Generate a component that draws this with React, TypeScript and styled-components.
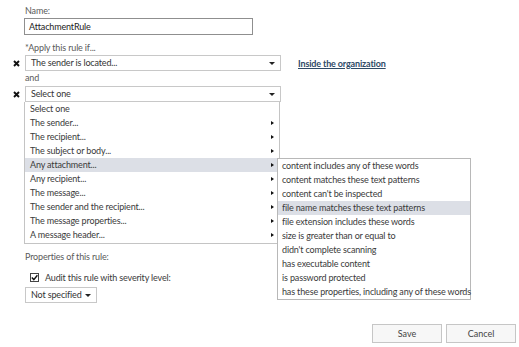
import React from 'react';
import styled, { createGlobalStyle } from 'styled-components';

const GlobalStyle = createGlobalStyle`
  html, body {
    margin: 0;
    padding: 0;
    background: #ffffff;
  }
  body {
    font-family: Lato, "Noto Sans", sans-serif;
    font-size: 9px;
    letter-spacing: -0.15px;
    color: #3a3a3a;
  }
`;

const Page = styled.div`
  position: relative;
  width: 519px;
  height: 347px;
  box-sizing: border-box;
  padding: 4px 0 0 10px;
  display: flex;
  flex-direction: column;
  overflow: hidden;
`;

const Label = styled.div<{ $top?: number }>`
  padding-left: 15px;
  margin-top: ${({ $top }) => $top ?? 0}px;
  height: 14px;
  line-height: 14px;
  color: #5a5a5a;
`;

const NameInput = styled.div`
  margin: 0 0 0 14px;
  width: 229px;
  height: 17px;
  box-sizing: border-box;
  border: 1px solid #8f8f8f;
  padding: 0 4px;
  line-height: 15px;
  color: #222222;
`;

const ConditionRow = styled.div<{ $top?: number }>`
  display: flex;
  align-items: center;
  margin-top: ${({ $top }) => $top ?? 0}px;
`;

const Remove = styled.span`
  width: 15px;
  display: flex;
  align-items: center;
  justify-content: flex-start;
  padding-left: 3px;
  box-sizing: border-box;
`;

const Select = styled.div<{ $width: number; $height?: number }>`
  position: relative;
  width: ${({ $width }) => $width}px;
  height: ${({ $height }) => $height ?? 16}px;
  box-sizing: border-box;
  border: 1px solid #c8c8c8;
  padding: 0 18px 0 5px;
  line-height: ${({ $height }) => ($height ?? 16) - 2}px;
  color: #333333;
  white-space: nowrap;
`;

const Caret = styled.span`
  position: absolute;
  right: 5px;
  top: 50%;
  margin-top: -1px;
  width: 0;
  height: 0;
  border-left: 3px solid transparent;
  border-right: 3px solid transparent;
  border-top: 3px solid #222222;
`;

const OrgLink = styled.a`
  margin-left: 17px;
  font-weight: 700;
  color: #2e4a66;
  text-decoration: underline;
`;

const Menu = styled.div`
  margin-left: 14px;
  width: 256px;
  box-sizing: border-box;
  border: 1px solid #c4c4c4;
  border-top: none;
  padding-bottom: 1px;
  background: #ffffff;
`;

const MenuItem = styled.div<{ $active?: boolean }>`
  position: relative;
  height: 14px;
  line-height: 14px;
  padding-left: 5px;
  background: ${({ $active }) => ($active ? '#dcdfe6' : 'transparent')};
  white-space: nowrap;
`;

const Arrow = styled.span`
  position: absolute;
  right: 5px;
  top: 5px;
  width: 0;
  height: 0;
  border-top: 2.5px solid transparent;
  border-bottom: 2.5px solid transparent;
  border-left: 3px solid #111111;
`;

const Flyout = styled.div`
  position: absolute;
  left: 252px;
  top: 0;
  width: 194px;
  box-sizing: border-box;
  border: 1px solid #b8b8b8;
  background: #ffffff;
  z-index: 2;
`;

const FlyoutItem = styled.div<{ $active?: boolean }>`
  height: 14px;
  line-height: 14px;
  padding-left: 4px;
  background: ${({ $active }) => ($active ? '#dcdfe6' : 'transparent')};
  white-space: nowrap;
`;

const CheckRow = styled.div`
  display: flex;
  align-items: center;
  gap: 6px;
  margin: 6px 0 0 20px;
  height: 14px;
`;

const Box = styled.span`
  width: 9px;
  height: 9px;
  box-sizing: border-box;
  border: 1px solid #444444;
  display: flex;
  align-items: center;
  justify-content: center;
`;

const Severity = styled.div`
  margin: 3px 0 0 15px;
`;

const Footer = styled.div`
  margin-top: auto;
  margin-bottom: 4px;
  display: flex;
  justify-content: flex-end;
  gap: 4px;
  padding-right: 3px;
`;

const Button = styled.button`
  width: 70px;
  height: 19px;
  box-sizing: border-box;
  border: 1px solid #c6c6c6;
  background: #f7f7f7;
  color: #444444;
  font-family: Lato, "Noto Sans", sans-serif;
  font-size: 9px;
  padding: 0;
`;

const XIcon = () => (
  <svg width="7" height="7" viewBox="0 0 7 7">
    <path d="M1 1 L6 6 M6 1 L1 6" stroke="#111" strokeWidth="1.9" />
  </svg>
);

const Tick = () => (
  <svg width="7" height="7" viewBox="0 0 7 7">
    <path d="M0.8 3.6 L2.8 5.6 L6.4 1.2" stroke="#111" strokeWidth="1.4" fill="none" />
  </svg>
);

const menuItems = [
  { label: 'Select one', sub: false },
  { label: 'The sender...', sub: true },
  { label: 'The recipient...', sub: true },
  { label: 'The subject or body...', sub: true },
  { label: 'Any attachment...', sub: true },
  { label: 'Any recipient...', sub: true },
  { label: 'The message...', sub: true },
  { label: 'The sender and the recipient...', sub: true },
  { label: 'The message properties...', sub: true },
  { label: 'A message header...', sub: true },
];

const attachmentOptions = [
  'content includes any of these words',
  'content matches these text patterns',
  "content can't be inspected",
  'file name matches these text patterns',
  'file extension includes these words',
  'size is greater than or equal to',
  "didn't complete scanning",
  'has executable content',
  'is password protected',
  'has these properties, including any of these words',
];

export default function App() {
  return (
    <>
      <GlobalStyle />
      <Page>
        <Label>Name:</Label>
        <NameInput>AttachmentRule</NameInput>
        <Label $top={6}>*Apply this rule if...</Label>
        <ConditionRow>
          <Remove>
            <XIcon />
          </Remove>
          <Select $width={256}>
            The sender is located...
            <Caret />
          </Select>
          <OrgLink>Inside the organization</OrgLink>
        </ConditionRow>
        <Label>and</Label>
        <ConditionRow $top={1}>
          <Remove>
            <XIcon />
          </Remove>
          <Select $width={256}>
            Select one
            <Caret />
          </Select>
        </ConditionRow>
        <Menu>
          {menuItems.map((item, i) => (
            <MenuItem key={i} $active={item.label === 'Any attachment...'}>
              {item.label}
              {item.sub && <Arrow />}
              {item.label === 'Any attachment...' && (
                <Flyout>
                  {attachmentOptions.map((opt, j) => (
                    <FlyoutItem key={j} $active={j === 3}>
                      {opt}
                    </FlyoutItem>
                  ))}
                </Flyout>
              )}
            </MenuItem>
          ))}
        </Menu>
        <Label $top={6}>Properties of this rule:</Label>
        <CheckRow>
          <Box>
            <Tick />
          </Box>
          Audit this rule with severity level:
        </CheckRow>
        <Severity>
          <Select $width={72}>
            Not specified
            <Caret />
          </Select>
        </Severity>
        <Footer>
          <Button>Save</Button>
          <Button>Cancel</Button>
        </Footer>
      </Page>
    </>
  );
}
